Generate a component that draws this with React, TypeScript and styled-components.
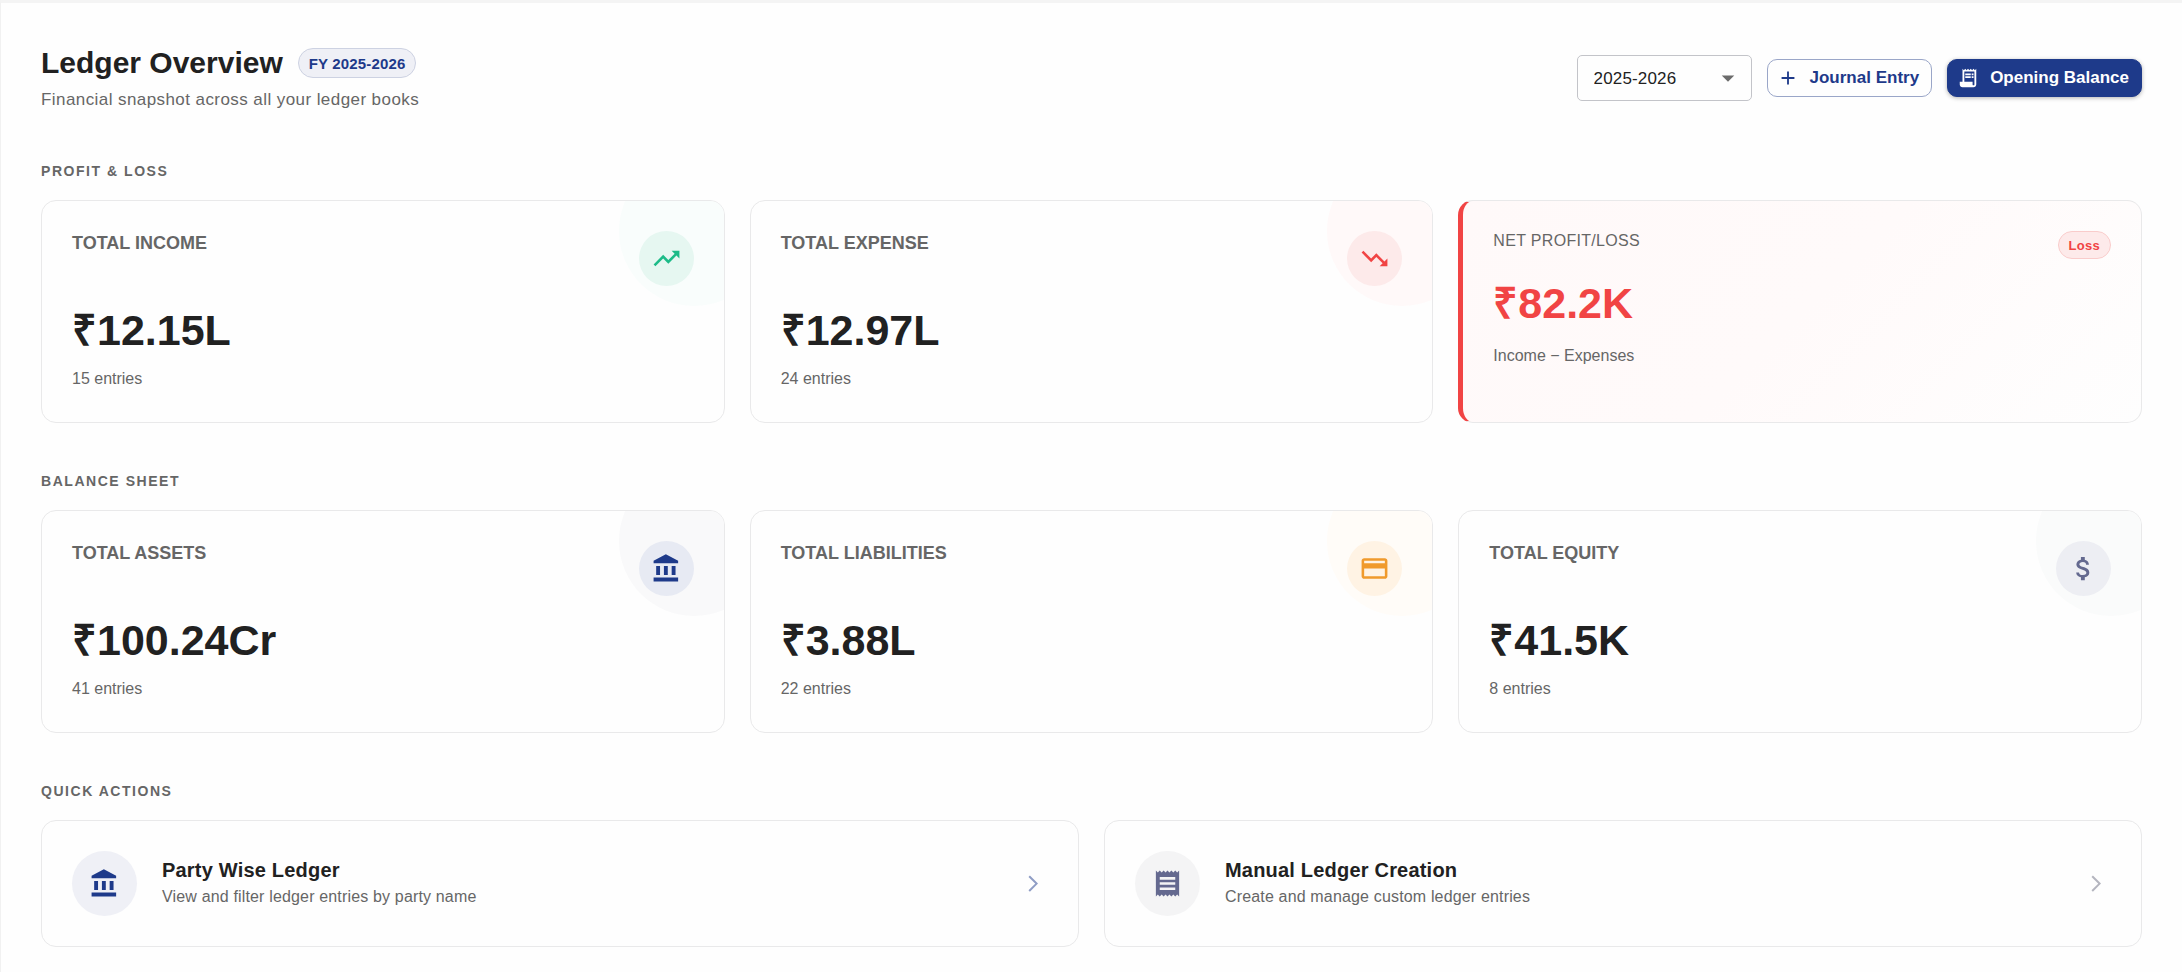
import React, { useState } from "react";
import styled, { createGlobalStyle } from "styled-components";
import {
  MdAdd,
  MdArrowDropDown,
  MdCreditCard,
  MdReceipt,
  MdReceiptLong,
  MdTrendingDown,
  MdTrendingUp,
} from "react-icons/md";

const color = {
  primary: "#1e3a8a",
  slate: "#64698f",
  success: "#1dbb88",
  error: "#f14444",
  warning: "#f09a2c",
  text: "#212121",
  muted: "#666666",
  line: "#e9e9ea",
};

const GlobalStyle = createGlobalStyle`
  *, *::before, *::after { box-sizing: border-box; }
  body {
    margin: 0;
    background: #fefefe;
    color: ${color.text};
    font-family: "Liberation Sans", Arial, Helvetica, sans-serif;
  }
  h1, h2, h3, p { margin: 0; }
`;

const Page = styled.main`
  min-height: 100vh;
  border-top: 3px solid #f4f4f4;
  border-left: 1px solid #f1f1f1;
  padding: 41px 40px 24px;
`;

const Header = styled.header`
  display: flex;
  justify-content: space-between;
  align-items: center;
  flex-wrap: wrap;
  gap: 15px;
`;

const TitleRow = styled.div`
  display: flex;
  align-items: center;
  gap: 15px;
  margin-bottom: 5px;
`;

const Title = styled.h1`
  font-size: 30px;
  line-height: 38px;
  font-weight: 700;
`;

const YearBadge = styled.span`
  display: inline-flex;
  align-items: center;
  height: 30px;
  padding: 0 10px;
  border: 1px solid #cdd2e2;
  border-radius: 15px;
  background: #eff0f6;
  color: ${color.primary};
  font-size: 15px;
  font-weight: 700;
  letter-spacing: 0.01em;
`;

const Subtitle = styled.p`
  color: ${color.muted};
  font-size: 17px;
  line-height: 25px;
  letter-spacing: 0.025em;
`;

const Actions = styled.div`
  display: flex;
  align-items: center;
  flex-wrap: wrap;
  gap: 15px;
`;

const SelectWrap = styled.label`
  position: relative;
  display: block;
  width: 175px;

  svg {
    position: absolute;
    top: 8px;
    right: 9px;
    color: #6b6b6b;
    pointer-events: none;
  }
`;

const YearSelect = styled.select`
  appearance: none;
  display: block;
  width: 100%;
  height: 46px;
  padding: 0 40px 0 16px;
  border: 1px solid #c3c4c9;
  border-radius: 5px;
  background: transparent;
  color: ${color.text};
  font-family: inherit;
  font-size: 17px;
  letter-spacing: 0.01em;
`;

const ActionButton = styled.button<{ $filled?: boolean }>`
  display: inline-flex;
  align-items: center;
  gap: 11px;
  height: 38px;
  padding: 0 12px 0 9px;
  border: 1px solid ${(p) => (p.$filled ? color.primary : "#9aa6c8")};
  border-radius: 10px;
  background: ${(p) => (p.$filled ? color.primary : "transparent")};
  color: ${(p) => (p.$filled ? "#ffffff" : color.primary)};
  box-shadow: ${(p) => (p.$filled ? "0 1px 4px rgba(0, 0, 0, 0.3)" : "none")};
  font-family: inherit;
  font-size: 17px;
  font-weight: 700;
  white-space: nowrap;
  cursor: pointer;
`;

const Section = styled.section<{ $first?: boolean }>`
  margin-top: ${(p) => (p.$first ? 49 : 48)}px;
`;

const SectionTitle = styled.h2`
  margin-bottom: 19px;
  color: ${color.muted};
  font-size: 14px;
  line-height: 20px;
  font-weight: 700;
  letter-spacing: 0.11em;
  text-transform: uppercase;
`;

const Grid = styled.div<{ $columns: number }>`
  display: grid;
  grid-template-columns: repeat(${(p) => p.$columns}, minmax(0, 1fr));
  gap: 25px;
`;

const Card = styled.article`
  position: relative;
  overflow: hidden;
  padding: 30px;
  border: 1px solid ${color.line};
  border-radius: 15px;
`;

const ResultCard = styled(Card)`
  border-left: 5px solid ${color.error};
  background: linear-gradient(135deg, #fff9f9 0%, #fffafa 50%, #fefefe 100%);
`;

const Corner = styled.span<{ $tint: string }>`
  position: absolute;
  top: -45px;
  right: -45px;
  width: 150px;
  height: 150px;
  border-radius: 50%;
  background: ${(p) => p.$tint};
`;

const CardTop = styled.div`
  position: relative;
  display: flex;
  justify-content: space-between;
  align-items: flex-start;
  margin-bottom: 19px;
`;

const CardLabel = styled.h3`
  color: ${color.muted};
  font-size: 18px;
  line-height: 24px;
  font-weight: 700;
  text-transform: uppercase;
`;

const ResultLabel = styled.h3`
  color: ${color.muted};
  font-size: 16px;
  line-height: 20px;
  font-weight: 400;
  letter-spacing: 0.02em;
  text-transform: uppercase;
`;

const IconDisc = styled.span<{ $tint: string; $ink: string; $large?: boolean }>`
  display: flex;
  flex: none;
  align-items: center;
  justify-content: center;
  width: ${(p) => (p.$large ? 65 : 55)}px;
  height: ${(p) => (p.$large ? 65 : 55)}px;
  border-radius: 50%;
  background: ${(p) => p.$tint};
  color: ${(p) => p.$ink};
`;

const Amount = styled.p<{ $ink?: string }>`
  color: ${(p) => p.$ink ?? color.text};
  font-size: 43px;
  line-height: 50px;
  font-weight: 700;
`;

const Caption = styled.p<{ $space: number }>`
  margin-top: ${(p) => p.$space}px;
  color: ${color.muted};
  font-size: 16px;
  line-height: 26px;
`;

const StatusChip = styled.span`
  display: inline-flex;
  align-items: center;
  height: 28px;
  padding: 0 10px;
  border: 1px solid #f9cccb;
  border-radius: 14px;
  background: #fdeaea;
  color: ${color.error};
  font-size: 13px;
  font-weight: 700;
  letter-spacing: 0.02em;
`;

const QuickCard = styled.a`
  display: flex;
  align-items: center;
  gap: 25px;
  padding: 30px;
  border: 1px solid ${color.line};
  border-radius: 15px;
  color: inherit;
  text-decoration: none;
`;

const QuickText = styled.div`
  flex: 1;
  min-width: 0;
`;

const QuickTitle = styled.h3`
  margin-bottom: 2px;
  font-size: 20px;
  line-height: 24px;
  font-weight: 700;
  letter-spacing: 0.01em;
`;

const QuickDescription = styled.p`
  color: ${color.muted};
  font-size: 16px;
  line-height: 26px;
  letter-spacing: 0.01em;
`;

const ChevronSvg = styled.svg<{ $ink: string }>`
  flex: none;
  fill: none;
  stroke: ${(p) => p.$ink};
  stroke-width: 2;
`;

type IconComponent = React.ComponentType<{ size?: number; "aria-hidden"?: boolean }>;

function BankIcon({ size = 24 }: { size?: number }) {
  return (
    <svg width={size} height={size} viewBox="0 0 24 24" fill="currentColor" aria-hidden>
      <path d="M4 10v7h3v-7H4zm6 0v7h3v-7h-3zM2 22h19v-3H2v3zm14-12v7h3v-7h-3zm-4.5-9L2 6v2h19V6l-9.5-5z" />
    </svg>
  );
}

function DollarIcon({ size = 24 }: { size?: number }) {
  return (
    <svg width={size} height={size} viewBox="0 0 24 24" fill="currentColor" aria-hidden>
      <path d="M11.8 10.9c-2.27-.59-3-1.2-3-2.15 0-1.09 1.01-1.85 2.7-1.85 1.78 0 2.44.85 2.5 2.1h2.21c-.07-1.72-1.12-3.3-3.21-3.81V3h-3v2.16c-1.94.42-3.5 1.68-3.5 3.61 0 2.31 1.91 3.46 4.7 4.13 2.5.6 3 1.48 3 2.41 0 .69-.49 1.79-2.7 1.79-2.06 0-2.87-.92-2.98-2.1h-2.2c.12 2.19 1.76 3.42 3.68 3.83V21h3v-2.15c1.95-.37 3.5-1.5 3.5-3.55 0-2.84-2.43-3.81-4.7-4.4z" />
    </svg>
  );
}

function Chevron({ ink }: { ink: string }) {
  return (
    <ChevronSvg $ink={ink} width={30} height={30} viewBox="0 0 30 30" aria-hidden>
      <path d="M11.2 7.2 18.6 14.6 11.2 22" />
    </ChevronSvg>
  );
}

interface Stat {
  label: string;
  amount: string;
  entries: number;
  icon: IconComponent;
  ink: string;
  disc: string;
  corner: string;
}

const profitAndLoss: Stat[] = [
  { label: "Total Income", amount: "₹12.15L", entries: 15, icon: MdTrendingUp, ink: color.success, disc: "#e6f7f1", corner: "#f9fdfc" },
  { label: "Total Expense", amount: "₹12.97L", entries: 24, icon: MdTrendingDown, ink: color.error, disc: "#fdeaea", corner: "#fff9f9" },
];

const balanceSheet: Stat[] = [
  { label: "Total Assets", amount: "₹100.24Cr", entries: 41, icon: BankIcon, ink: color.primary, disc: "#e7eaf3", corner: "#f9f9fa" },
  { label: "Total Liabilities", amount: "₹3.88L", entries: 22, icon: MdCreditCard, ink: color.warning, disc: "#fff3e4", corner: "#fffcf8" },
  { label: "Total Equity", amount: "₹41.5K", entries: 8, icon: DollarIcon, ink: color.slate, disc: "#edeef3", corner: "#fafbfb" },
];

const quickActions = [
  { title: "Party Wise Ledger", description: "View and filter ledger entries by party name", icon: BankIcon, ink: color.primary, disc: "#eff0f6", chevron: "#8f9dc5" },
  { title: "Manual Ledger Creation", description: "Create and manage custom ledger entries", icon: MdReceipt, ink: color.slate, disc: "#f4f4f5", chevron: "#b4b5bf" },
];

function StatCard({ stat }: { stat: Stat }) {
  const Icon = stat.icon;
  return (
    <Card>
      <Corner $tint={stat.corner} />
      <CardTop>
        <CardLabel>{stat.label}</CardLabel>
        <IconDisc $tint={stat.disc} $ink={stat.ink}>
          <Icon size={31} aria-hidden />
        </IconDisc>
      </CardTop>
      <Amount>{stat.amount}</Amount>
      <Caption $space={11}>{stat.entries} entries</Caption>
    </Card>
  );
}

export default function App() {
  const [year, setYear] = useState("2025-2026");

  return (
    <>
      <GlobalStyle />
      <Page>
        <Header>
          <div>
            <TitleRow>
              <Title>Ledger Overview</Title>
              <YearBadge>FY {year}</YearBadge>
            </TitleRow>
            <Subtitle>Financial snapshot across all your ledger books</Subtitle>
          </div>
          <Actions>
            <SelectWrap>
              <YearSelect
                aria-label="Financial year"
                value={year}
                onChange={(e) => setYear(e.target.value)}
              >
                <option>2025-2026</option>
                <option>2024-2025</option>
              </YearSelect>
              <MdArrowDropDown size={30} aria-hidden />
            </SelectWrap>
            <ActionButton type="button">
              <MdAdd size={22} aria-hidden />
              Journal Entry
            </ActionButton>
            <ActionButton type="button" $filled>
              <MdReceiptLong size={22} aria-hidden />
              Opening Balance
            </ActionButton>
          </Actions>
        </Header>

        <Section $first>
          <SectionTitle>Profit &amp; Loss</SectionTitle>
          <Grid $columns={3}>
            {profitAndLoss.map((stat) => (
              <StatCard key={stat.label} stat={stat} />
            ))}
            <ResultCard>
              <CardTop>
                <ResultLabel>Net Profit/Loss</ResultLabel>
                <StatusChip>Loss</StatusChip>
              </CardTop>
              <Amount $ink={color.error}>₹82.2K</Amount>
              <Caption $space={15}>Income − Expenses</Caption>
            </ResultCard>
          </Grid>
        </Section>

        <Section>
          <SectionTitle>Balance Sheet</SectionTitle>
          <Grid $columns={3}>
            {balanceSheet.map((stat) => (
              <StatCard key={stat.label} stat={stat} />
            ))}
          </Grid>
        </Section>

        <Section>
          <SectionTitle>Quick Actions</SectionTitle>
          <Grid $columns={2}>
            {quickActions.map(({ title, description, icon: Icon, ink, disc, chevron }) => (
              <QuickCard key={title} href="#">
                <IconDisc $tint={disc} $ink={ink} $large>
                  <Icon size={31} aria-hidden />
                </IconDisc>
                <QuickText>
                  <QuickTitle>{title}</QuickTitle>
                  <QuickDescription>{description}</QuickDescription>
                </QuickText>
                <Chevron ink={chevron} />
              </QuickCard>
            ))}
          </Grid>
        </Section>
      </Page>
    </>
  );
}
